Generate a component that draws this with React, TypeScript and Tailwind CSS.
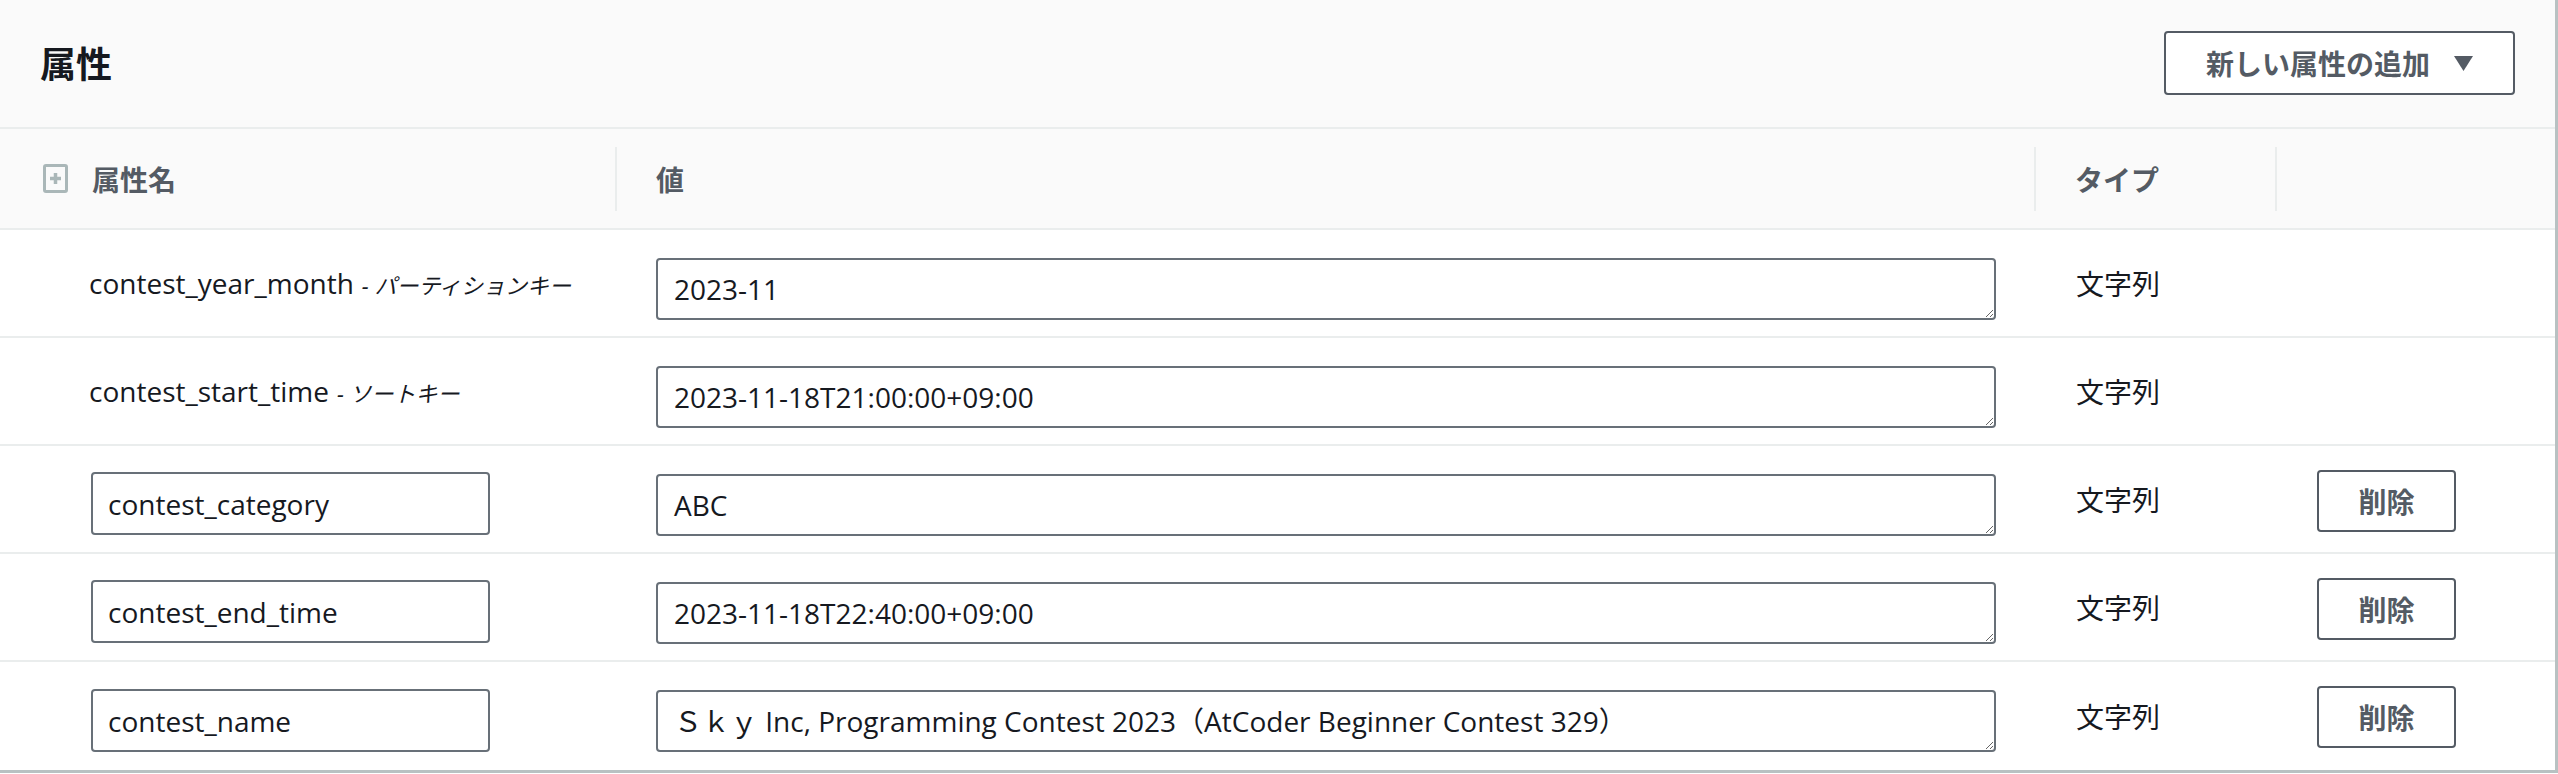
import React from 'react';

interface Attr {
  name: string;
  keyLabel?: string;
  value: string;
  editable: boolean;
}

const attrs: Attr[] = [
  { name: 'contest_year_month', keyLabel: 'パーティションキー', value: '2023-11', editable: false },
  { name: 'contest_start_time', keyLabel: 'ソートキー', value: '2023-11-18T21:00:00+09:00', editable: false },
  { name: 'contest_category', value: 'ABC', editable: true },
  { name: 'contest_end_time', value: '2023-11-18T22:40:00+09:00', editable: true },
  { name: 'contest_name', value: 'Ｓｋｙ Inc, Programming Contest 2023（AtCoder Beginner Contest 329）', editable: true },
];

const ExpandIcon = () => (
  <svg width="25" height="29" viewBox="0 0 25 29" className="shrink-0">
    <rect x="1.5" y="1.5" width="22" height="26" rx="1.5" fill="none" stroke="#aab7b8" strokeWidth="3" />
    <path d="M12.5 9v11M7 14.5h11" stroke="#aab7b8" strokeWidth="3.5" />
  </svg>
);

export default function App() {
  return (
    <div className="w-[2558px] h-[774px] bg-white font-['Open_Sans','Noto_Sans_CJK_JP',sans-serif] text-[#16191f] overflow-hidden">
      <div className="w-[2558px] h-[773px] border-r-[3px] border-b-[3px] border-[#b8c1c2] bg-white">
        {/* Header */}
        <div className="h-[129px] bg-[#fafafa] border-b-2 border-[#eaeded] flex items-center justify-between pl-[40px] pr-[40px]">
          <h2 className="text-[36px] font-bold leading-none text-[#16191f] font-['Noto_Sans_CJK_JP',sans-serif] -mt-[4px]">属性</h2>
          <button className="w-[351px] h-[64px] -mt-[1px] border-2 border-[#545b64] rounded-[4px] bg-white flex items-center justify-center gap-[24px] text-[28px] font-bold text-[#545b64] font-['Noto_Sans_CJK_JP',sans-serif]">
            <span>新しい属性の追加</span>
            <svg width="19" height="15" viewBox="0 0 19 15">
              <path d="M0 0h19L9.5 15z" fill="#545b64" />
            </svg>
          </button>
        </div>

        {/* Column header */}
        <div className="h-[101px] bg-[#fafafa] border-b-2 border-[#eaeded] grid grid-cols-[615px_1419px_241px_1fr] items-center text-[28px] font-bold text-[#545b64] font-['Noto_Sans_CJK_JP',sans-serif]">
          <div className="flex items-center gap-[24px] pl-[43px]">
            <ExpandIcon />
            <span>属性名</span>
          </div>
          <div className="h-[64px] border-l-2 border-[#eaeded] flex items-center pl-[39px]">値</div>
          <div className="h-[64px] border-l-2 border-[#eaeded] flex items-center pl-[39px]">タイプ</div>
          <div className="h-[64px] border-l-2 border-[#eaeded]" />
        </div>

        {/* Rows */}
        {attrs.map((a, i) => (
          <div
            key={a.name}
            className={`h-[108px] grid grid-cols-[615px_1419px_241px_1fr] ${i < attrs.length - 1 ? 'border-b-2 border-[#eaeded]' : ''}`}
          >
            <div className="flex items-center">
              {a.editable ? (
                <input
                  readOnly
                  value={a.name}
                  className="ml-[91px] mt-[9px] w-[399px] h-[63px] border-2 border-[#687078] rounded-[4px] px-[15px] text-[28px] text-[#16191f] bg-white outline-none"
                />
              ) : (
                <div className="pl-[89px] flex items-baseline whitespace-nowrap">
                  <span className="text-[28px]">{a.name}</span>
                  <span className="text-[22px] italic ml-[8px]">- {a.keyLabel}</span>
                </div>
              )}
            </div>
            <div className="flex items-start pl-[41px] pt-[28px]">
              <textarea
                readOnly
                rows={1}
                value={a.value}
                className="w-[1340px] h-[62px] border-2 border-[#687078] rounded-[4px] pl-[16px] pr-[16px] py-[9px] leading-[40px] text-[28px] text-[#16191f] bg-white outline-none resize-y overflow-hidden whitespace-nowrap"
              />
            </div>
            <div className="flex items-center pl-[42px] text-[28px] font-['Noto_Sans_CJK_JP',sans-serif] text-[#16191f]">
              文字列
            </div>
            <div className="flex items-start pl-[42px]">
              {a.editable && (
                <button className="mt-[24px] w-[139px] h-[62px] border-2 border-[#545b64] rounded-[4px] bg-white text-[28px] font-bold text-[#545b64] font-['Noto_Sans_CJK_JP',sans-serif]">
                  削除
                </button>
              )}
            </div>
          </div>
        ))}
      </div>
    </div>
  );
}
